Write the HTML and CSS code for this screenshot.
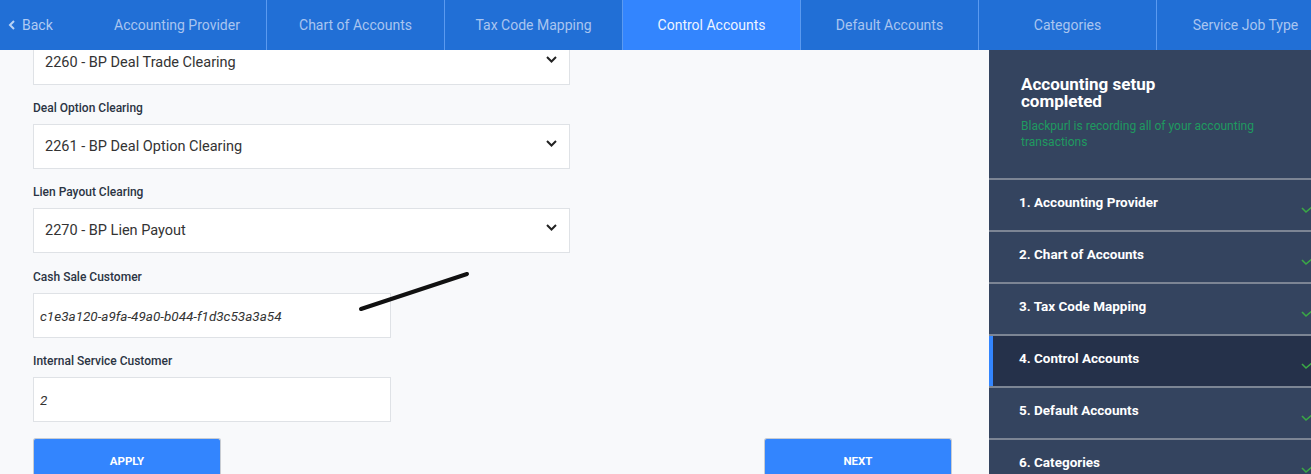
FILE: index.html
```html
<!DOCTYPE html>
<html lang="en">
<head>
    <meta charset="UTF-8">
    <meta name="viewport" content="width=device-width, initial-scale=1.0">
    <title>Accounting Setup - Control Accounts</title>
    <link rel="stylesheet" href="styles.css">
</head>
<body>
    <header class="topnav">
        <a class="back" href="#">
            <svg width="8" height="10" viewBox="0 0 8 10"><polyline points="6,1 2,5 6,9" fill="none" stroke="#b9d2f5" stroke-width="2"/></svg>
            <span>Back</span>
        </a>
        <nav class="tabs">
            <a class="tab" href="#">Accounting Provider</a>
            <a class="tab" href="#">Chart of Accounts</a>
            <a class="tab" href="#">Tax Code Mapping</a>
            <a class="tab active" href="#">Control Accounts</a>
            <a class="tab" href="#">Default Accounts</a>
            <a class="tab" href="#">Categories</a>
            <a class="tab" href="#">Service Job Type</a>
        </nav>
    </header>
    <div class="layout">
        <main class="content">
            <form class="settings">
                <div class="field">
                    <label>Deal Trade Clearing</label>
                    <div class="select"><span>2260 - BP Deal Trade Clearing</span><svg class="caret" width="11" height="7" viewBox="0 0 11 7"><polyline points="1,1 5.5,5.5 10,1" fill="none" stroke="#222" stroke-width="2"/></svg></div>
                </div>
                <div class="field">
                    <label>Deal Option Clearing</label>
                    <div class="select"><span>2261 - BP Deal Option Clearing</span><svg class="caret" width="11" height="7" viewBox="0 0 11 7"><polyline points="1,1 5.5,5.5 10,1" fill="none" stroke="#222" stroke-width="2"/></svg></div>
                </div>
                <div class="field wide-gap">
                    <label>Lien Payout Clearing</label>
                    <div class="select"><span>2270 - BP Lien Payout</span><svg class="caret" width="11" height="7" viewBox="0 0 11 7"><polyline points="1,1 5.5,5.5 10,1" fill="none" stroke="#222" stroke-width="2"/></svg></div>
                </div>
                <div class="field">
                    <label>Cash Sale Customer</label>
                    <input class="text-input" type="text" value="c1e3a120-a9fa-49a0-b044-f1d3c53a3a54">
                </div>
                <div class="field">
                    <label>Internal Service Customer</label>
                    <input class="text-input" type="text" value="2">
                </div>
                <div class="actions">
                    <button type="button" class="btn">APPLY</button>
                    <button type="button" class="btn">NEXT</button>
                </div>
            </form>
            <svg class="scribble" width="120" height="48" viewBox="0 0 120 48"><line x1="6" y1="41" x2="112" y2="6" stroke="#111" stroke-width="4" stroke-linecap="round"/></svg>
        </main>
        <aside class="progress">
            <div class="progress-head">
                <h2>Accounting setup completed</h2>
                <p>Blackpurl is recording all of your accounting transactions</p>
            </div>
            <ul class="steps">
                <li class="step"><span>1. Accounting Provider</span><svg class="check" width="13" height="9" viewBox="0 0 13 9"><polyline points="1,3 5,7 12,1" fill="none" stroke="#3aa845" stroke-width="1.6"/></svg></li>
                <li class="step"><span>2. Chart of Accounts</span><svg class="check" width="13" height="9" viewBox="0 0 13 9"><polyline points="1,3 5,7 12,1" fill="none" stroke="#3aa845" stroke-width="1.6"/></svg></li>
                <li class="step"><span>3. Tax Code Mapping</span><svg class="check" width="13" height="9" viewBox="0 0 13 9"><polyline points="1,3 5,7 12,1" fill="none" stroke="#3aa845" stroke-width="1.6"/></svg></li>
                <li class="step active"><span>4. Control Accounts</span><svg class="check" width="13" height="9" viewBox="0 0 13 9"><polyline points="1,3 5,7 12,1" fill="none" stroke="#3aa845" stroke-width="1.6"/></svg></li>
                <li class="step"><span>5. Default Accounts</span><svg class="check" width="13" height="9" viewBox="0 0 13 9"><polyline points="1,3 5,7 12,1" fill="none" stroke="#3aa845" stroke-width="1.6"/></svg></li>
                <li class="step"><span>6. Categories</span><svg class="check" width="13" height="9" viewBox="0 0 13 9"><polyline points="1,3 5,7 12,1" fill="none" stroke="#3aa845" stroke-width="1.6"/></svg></li>
            </ul>
        </aside>
    </div>
</body>
</html>
```

FILE: styles.css
```css
body {
    font-family: Roboto, "Noto Sans", sans-serif;
    margin: 0;
    padding: 0;
    height: 474px;
    overflow: hidden;
    background-color: #f8f9fb;
}
.topnav {
    display: flex;
    height: 50px;
    background-color: #216fd6;
    overflow: hidden;
    white-space: nowrap;
}
.back {
    flex: 0 0 88px;
    display: flex;
    align-items: center;
    gap: 6px;
    padding-left: 8px;
    box-sizing: border-box;
    color: #b0cbf3;
    font-size: 14px;
    text-decoration: none;
}
.tabs {
    display: flex;
    flex: 1;
    min-width: 0;
}
.tab {
    flex: 0 0 178px;
    display: flex;
    align-items: center;
    justify-content: center;
    color: #a9c5f0;
    font-size: 14px;
    text-decoration: none;
    box-sizing: border-box;
}
.tab + .tab {
    border-left: 1px solid #5b9af0;
}
.tab.active {
    background-color: #3385fe;
    color: #eef4ff;
}
.layout {
    display: flex;
    height: 424px;
}
.content {
    position: relative;
    flex: 0 0 989px;
    overflow: hidden;
    padding: 0 37px 0 33px;
    box-sizing: border-box;
}
.settings {
    margin-top: -34px;
}
.field {
    margin-bottom: 15px;
}
.field.wide-gap {
    margin-bottom: 16px;
}
.field label {
    display: block;
    font-size: 12px;
    font-weight: 500;
    line-height: 16px;
    color: #2b3443;
    margin-bottom: 8px;
}
.select {
    display: flex;
    align-items: center;
    justify-content: space-between;
    width: 537px;
    height: 45px;
    box-sizing: border-box;
    padding: 0 12px 0 11px;
    background: white;
    border: 1px solid #dfe2e6;
    font-size: 14.5px;
    color: #333;
}
.caret {
    margin-top: -6px;
}
.text-input {
    display: block;
    width: 358px;
    height: 45px;
    box-sizing: border-box;
    padding: 0 6px;
    background: white;
    border: 1px solid #dfe2e6;
    font-family: inherit;
    font-size: 13.5px;
    font-style: italic;
    color: #333;
}
.actions {
    display: flex;
    justify-content: space-between;
    padding-top: 1px;
}
.btn {
    width: 188px;
    height: 44px;
    background-color: #3385fe;
    color: white;
    border: 1px solid #c8ccd2;
    border-bottom: none;
    border-radius: 3px 3px 0 0;
    font-family: inherit;
    font-size: 11.5px;
    font-weight: 700;
    cursor: pointer;
}
.scribble {
    position: absolute;
    left: 355px;
    top: 218px;
}
.progress {
    flex: 0 0 322px;
    background-color: #34445f;
    overflow: hidden;
}
.progress-head {
    padding: 26px 30px 28px 32px;
}
.progress-head h2 {
    margin: 0;
    width: 180px;
    font-size: 17px;
    line-height: 17px;
    font-weight: 700;
    color: white;
}
.progress-head p {
    margin: 8px 0 0;
    font-size: 12px;
    line-height: 16px;
    color: #1f9a5f;
}
.steps {
    list-style: none;
    margin: 0;
    padding: 0;
}
.step {
    display: flex;
    justify-content: space-between;
    height: 52px;
    padding: 14px 0 0 30px;
    box-sizing: border-box;
    border-top: 2px solid #7c8594;
    color: white;
    font-size: 13.5px;
    font-weight: 700;
    line-height: 17px;
}
.step.active {
    background-color: #25314a;
    box-shadow: inset 4px 0 #3385fe;
}
.check {
    margin-top: 11px;
    margin-right: -3px;
}
```
